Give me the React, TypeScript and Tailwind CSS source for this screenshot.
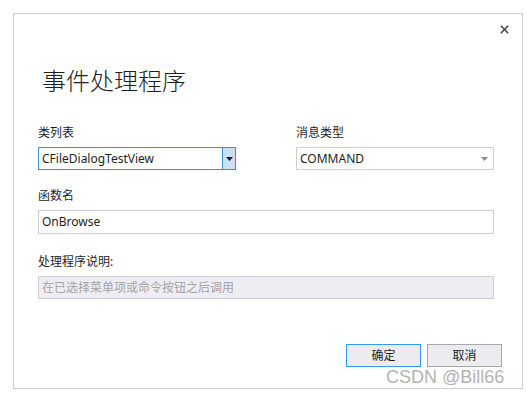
import React from "react";

const ui = { fontFamily: '"Noto Sans", "Noto Sans CJK SC", sans-serif' };

const Field = ({ label, children }: { label: string; children: React.ReactNode }) => (
  <div className="flex flex-col">
    <div className="h-4 text-[12px] leading-4 text-[#1e1e1e]">{label}</div>
    <div className="mt-[6px]">{children}</div>
  </div>
);

const Arrow = ({ color }: { color: string }) => (
  <svg width="7" height="4" viewBox="0 0 7 4">
    <path d="M0 0 H7 L3.5 4 Z" fill={color} />
  </svg>
);

const EventHandlerDialog = () => {
  return (
    <div className="relative min-h-[393px] w-[527px] overflow-hidden bg-white" style={ui}>
      <div className="ml-[13px] mt-[13px] flex h-[376px] w-[510px] flex-col border border-[#cccedb] bg-white">
        <div className="flex h-[30px] justify-end pr-[13px] pt-[11px]">
          <svg width="9" height="9" viewBox="0 0 9 9">
            <path d="M0.8 0.8 L8.2 8.2 M8.2 0.8 L0.8 8.2" stroke="#444444" strokeWidth="1.6" />
          </svg>
        </div>
        <h1
          className="ml-[28px] mt-[19px] h-[34px] text-[24px] font-light leading-[34px] text-[#1e1e1e]"
          style={{ fontFamily: '"Noto Sans CJK SC", sans-serif' }}
        >
          事件处理程序
        </h1>
        <div className="mt-[28px] flex gap-[60px] px-[24px]">
          <div className="w-[198px]">
            <Field label="类列表">
              <div className="flex h-[23px] border border-[#3c8fd6] bg-white">
                <div className="flex flex-1 items-center pl-[3px] text-[12px] text-[#1e1e1e]">
                  CFileDialogTestView
                </div>
                <div className="flex w-[13px] items-center justify-center border-l border-[#3c8fd6] bg-[#c9e0f7]">
                  <Arrow color="#1e1e1e" />
                </div>
              </div>
            </Field>
          </div>
          <div className="w-[198px]">
            <Field label="消息类型">
              <div className="flex h-[23px] items-center justify-between border border-[#cccedb] bg-white pl-[3px] pr-[5px]">
                <span className="text-[12px] text-[#1e1e1e]">COMMAND</span>
                <Arrow color="#8a8a8a" />
              </div>
            </Field>
          </div>
        </div>
        <div className="mt-[18px] px-[24px]">
          <Field label="函数名">
            <div className="flex h-[24px] w-[456px] items-center border border-[#cccedb] pl-[3px] text-[12px] text-[#1e1e1e]">
              OnBrowse
            </div>
          </Field>
        </div>
        <div className="mt-[20px] px-[24px]">
          <Field label="处理程序说明:">
            <div className="flex h-[23px] w-[456px] items-center border border-[#cccedb] bg-[#eeeef2] pl-[3px] text-[12px] text-[#a2a4a5]">
              在已选择菜单项或命令按钮之后调用
            </div>
          </Field>
        </div>
        <div className="mt-auto mb-[21px] flex justify-end gap-[6px] pr-[20px]">
          <button className="h-[23px] w-[75px] border border-[#3399ff] bg-[#ececf0] text-[12px] text-[#1e1e1e]">
            确定
          </button>
          <button className="h-[23px] w-[75px] border border-[#a8a8a8] bg-[#ececf0] text-[12px] text-[#1e1e1e]">
            取消
          </button>
        </div>
      </div>
      <div
        className="absolute left-[386px] top-[366px] text-[18px] leading-[22px] text-[#b3b3b3]"
        style={{ fontFamily: '"Liberation Sans", Arial, sans-serif' }}
      >
        CSDN @Bill66
      </div>
    </div>
  );
};

export default function App() {
  return <EventHandlerDialog />;
}
